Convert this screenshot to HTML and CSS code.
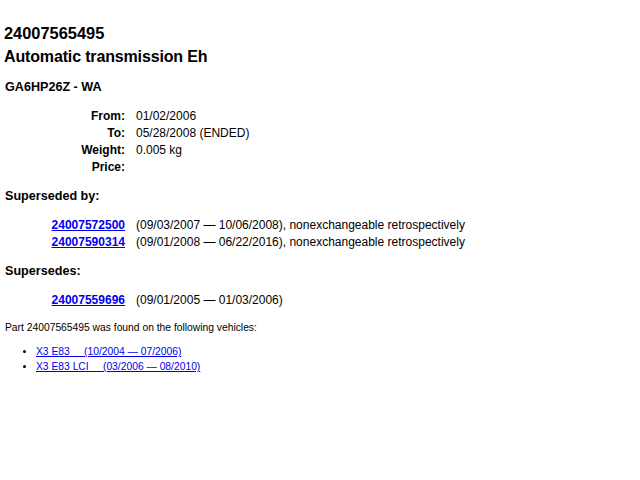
FILE: index.html
```html
<!DOCTYPE html>
<html>
<head>
<meta charset="utf-8">
<link rel="stylesheet" href="styles.css">
</head>
<body>
<div class="page">
  <h1 class="title">24007565495</h1>
  <h1 class="title name">Automatic transmission Eh</h1>
  <h3 class="sub">GA6HP26Z - WA</h3>
  <div class="grid details">
    <div class="label">From:</div><div class="value">01/02/2006</div>
    <div class="label">To:</div><div class="value">05/28/2008 (ENDED)</div>
    <div class="label">Weight:</div><div class="value">0.005 kg</div>
    <div class="label">Price:</div><div class="value"></div>
  </div>
  <h3 class="sub section">Superseded by:</h3>
  <div class="grid links">
    <div class="label"><a href="#">24007572500</a></div><div class="value">(09/03/2007 — 10/06/2008), nonexchangeable retrospectively</div>
    <div class="label"><a href="#">24007590314</a></div><div class="value">(09/01/2008 — 06/22/2016), nonexchangeable retrospectively</div>
  </div>
  <h3 class="sub section">Supersedes:</h3>
  <div class="grid links">
    <div class="label"><a href="#">24007559696</a></div><div class="value">(09/01/2005 — 01/03/2006)</div>
  </div>
  <p class="note">Part 24007565495 was found on the following vehicles:</p>
  <ul class="vehicles">
    <li><a href="#">X3 E83 &nbsp;&nbsp;&nbsp;&nbsp;(10/2004 — 07/2006)</a></li>
    <li><a href="#">X3 E83 LCI &nbsp;&nbsp;&nbsp;&nbsp;(03/2006 — 08/2010)</a></li>
  </ul>
</div>
</body>
</html>
```

FILE: styles.css
```css
html, body {
  margin: 0;
  padding: 0;
  background: #fff;
}
body {
  font-family: "Liberation Sans", Arial, Helvetica, sans-serif;
  color: #000;
}
.page {
  padding: 21px 5px 0 4px;
}
.title {
  font-size: 16.4px;
  font-weight: bold;
  line-height: 24px;
  margin: 0;
}
.title.name {
  font-size: 16px;
  letter-spacing: -0.15px;
}
.sub {
  font-size: 12.6px;
  font-weight: bold;
  line-height: 17px;
  margin: 0 0 0 1px;
}
.title + .sub {
  margin-top: 10px;
}
.section {
  margin-top: 12px;
}
.grid {
  display: grid;
  grid-template-columns: 121px auto;
  column-gap: 11px;
  justify-content: start;
  font-size: 12px;
  line-height: 17px;
}
.details {
  margin-top: 12px;
}
.links {
  margin-top: 12px;
}
.label {
  text-align: right;
  font-weight: bold;
}
a {
  color: #0000ee;
  text-decoration: underline;
}
.note {
  font-size: 10.3px;
  line-height: 14px;
  margin: 12px 0 0 1px;
}
.vehicles {
  font-size: 10.3px;
  line-height: 15px;
  margin: 9px 0 0 0;
  padding-left: 32px;
}
```
